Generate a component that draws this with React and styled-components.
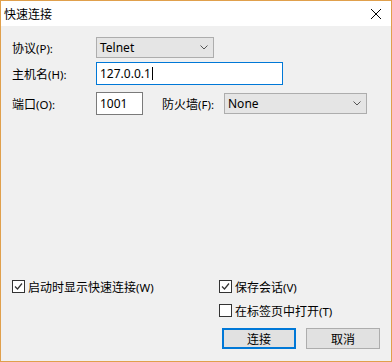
import styled, { createGlobalStyle } from 'styled-components'

const GlobalStyle = createGlobalStyle`
  html, body {
    margin: 0;
    padding: 0;
    background: #f0f0f0;
  }
  * {
    box-sizing: border-box;
  }
`

// Selve dialogvinduet med den oransje kanten
const Window = styled.div`
  width: 392px;
  height: 362px;
  border: 1px solid #e0a04c;
  background: #f0f0f0;
  display: flex;
  flex-direction: column;
  font-family: 'Noto Sans', 'Noto Sans CJK SC', sans-serif;
  font-size: 12px;
  color: #000;
`

const TitleBar = styled.div`
  height: 25px;
  background: #ffffff;
  display: flex;
  align-items: center;
  justify-content: space-between;
  padding: 0 10px 0 3px;
`

const Title = styled.span`
  font-family: 'Noto Sans CJK SC', sans-serif;
  font-size: 12px;
`

const CloseIcon = styled.svg`
  width: 10px;
  height: 10px;
`

const Body = styled.div`
  flex: 1;
  display: flex;
  flex-direction: column;
  padding: 11px 11px 12px 11px;
`

const Row = styled.div`
  display: flex;
  align-items: center;
  margin-top: ${({ $gap }) => $gap || 0}px;
`

const Label = styled.span`
  width: ${({ $w }) => $w || 84}px;
  margin-left: ${({ $ml }) => $ml || 0}px;
  white-space: nowrap;
  font-family: 'Noto Sans CJK SC', sans-serif;
  font-size: 12px;
`

const Accel = styled.span`
  font-family: 'Noto Sans', sans-serif;
  font-size: 11.5px;
`

// Nedtrekksliste i Windows-stil
const Select = styled.div`
  width: ${({ $w }) => $w}px;
  height: 21px;
  background: #e5e5e5;
  border: 1px solid #adadad;
  display: flex;
  align-items: center;
  justify-content: space-between;
  padding: 0 5px 0 3px;
`

const Chevron = styled.svg`
  width: 8px;
  height: 5px;
`

const Field = styled.div`
  width: ${({ $w }) => $w}px;
  height: 23px;
  background: #fff;
  border: 1px solid ${({ $focus }) => ($focus ? '#0078d7' : '#7a7a7a')};
  display: flex;
  align-items: center;
  padding: 0 3px;
`

const Caret = styled.span`
  display: inline-block;
  width: 1px;
  height: 13px;
  background: #000;
  margin-left: 1px;
`

const Spacer = styled.div`
  flex: 1;
`

const Options = styled.div`
  display: grid;
  grid-template-columns: 207px 1fr;
  row-gap: 11px;
`

const Check = styled.label`
  display: flex;
  align-items: center;
  gap: 3px;
  height: 13px;
  white-space: nowrap;
  font-family: 'Noto Sans CJK SC', sans-serif;
`

const Box = styled.span`
  width: 13px;
  height: 13px;
  border: 1px solid #333;
  background: #fff;
  display: flex;
  align-items: center;
  justify-content: center;
`

const Buttons = styled.div`
  display: flex;
  justify-content: flex-end;
  gap: 10px;
  margin-top: 11px;
`

const Button = styled.button`
  width: 74px;
  height: 21px;
  padding: 0;
  background: #e1e1e1;
  border: ${({ $primary }) => ($primary ? '2px solid #0078d7' : '1px solid #adadad')};
  font-family: 'Noto Sans CJK SC', sans-serif;
  font-size: 12px;
  color: #000;
`

function ChevronDown() {
  return (
    <Chevron viewBox="0 0 8 5">
      <path d="M0.5 0.5 L4 4 L7.5 0.5" fill="none" stroke="#555" strokeWidth="1" />
    </Chevron>
  )
}

function CheckBox({ label, accel, checked }) {
  return (
    <Check>
      <Box>
        {checked && (
          <svg width="9" height="9" viewBox="0 0 9 9">
            <path d="M1 4.5 L3.5 7 L8 1.5" fill="none" stroke="#333" strokeWidth="1.2" />
          </svg>
        )}
      </Box>
      <span>
        {label}
        <Accel>{accel}</Accel>
      </span>
    </Check>
  )
}

export default function App() {
  return (
    <>
      <GlobalStyle />
      <Window>
        <TitleBar>
          <Title>快速连接</Title>
          <CloseIcon viewBox="0 0 10 10">
            <path d="M0 0 L10 10 M10 0 L0 10" stroke="#000" strokeWidth="1" />
          </CloseIcon>
        </TitleBar>
        <Body>
          <Row>
            <Label>协议<Accel>(P):</Accel></Label>
            <Select $w={118}>
              <span>Telnet</span>
              <ChevronDown />
            </Select>
          </Row>
          <Row $gap={4}>
            <Label>主机名<Accel>(H):</Accel></Label>
            <Field $w={187} $focus>
              127.0.0.1
              <Caret />
            </Field>
          </Row>
          <Row $gap={7}>
            <Label>端口<Accel>(O):</Accel></Label>
            <Field $w={47}>1001</Field>
            <Label $w={62} $ml={19}>
              防火墙<Accel>(F):</Accel>
            </Label>
            <Select $w={143}>
              <span>None</span>
              <ChevronDown />
            </Select>
          </Row>
          <Spacer />
          <Options>
            <CheckBox label="启动时显示快速连接" accel="(W)" checked />
            <CheckBox label="保存会话" accel="(V)" checked />
            <div />
            <CheckBox label="在标签页中打开" accel="(T)" />
          </Options>
          <Buttons>
            <Button $primary>连接</Button>
            <Button>取消</Button>
          </Buttons>
        </Body>
      </Window>
    </>
  )
}
